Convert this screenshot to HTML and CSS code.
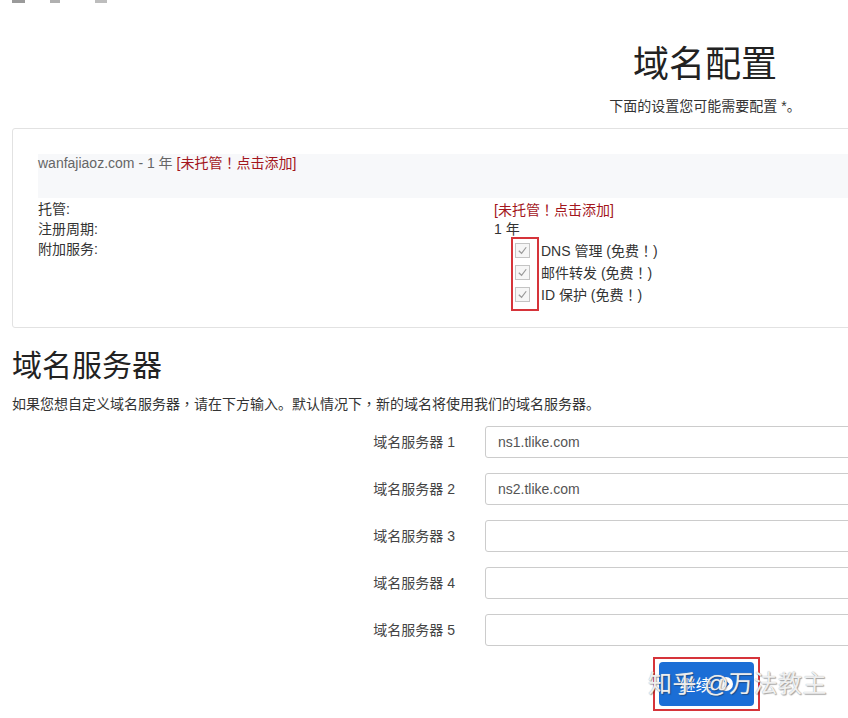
FILE: index.html
```html
<!DOCTYPE html>
<html lang="zh-CN">
<head>
<meta charset="utf-8">
<title>域名配置</title>
<link rel="stylesheet" href="styles.css">
</head>
<body>
<div class="toolbar">
  <span class="tool tool-a"></span>
  <span class="tool tool-b"></span>
  <span class="tool tool-c"></span>
</div>
<div class="page">
  <header class="header">
    <h1 class="title">域名配置</h1>
    <p class="lead">下面的设置您可能需要配置 *。</p>
  </header>

  <section class="panel">
    <div class="domain-bar">wanfajiaoz.com - 1 年 <span class="red">[未托管<span class="p" lang="zh-TW">！</span>点击添加]</span></div>
    <div class="details">
      <div class="labels">
        <div class="row">托管:</div>
        <div class="row">注册周期:</div>
        <div class="row">附加服务:</div>
      </div>
      <div class="values">
        <div class="row red">[未托管<span class="p" lang="zh-TW">！</span>点击添加]</div>
        <div class="row">1 年</div>
        <div class="addons">
          <div class="addon"><span class="cb"><svg viewBox="0 0 14 14"><path d="M3 7.2 L6 10 L11 3.5" fill="none" stroke="#9a9a9a" stroke-width="1.3"/></svg></span><span>DNS 管理 (免费<span class="p" lang="zh-TW">！</span>)</span></div>
          <div class="addon"><span class="cb"><svg viewBox="0 0 14 14"><path d="M3 7.2 L6 10 L11 3.5" fill="none" stroke="#9a9a9a" stroke-width="1.3"/></svg></span><span>邮件转发 (免费<span class="p" lang="zh-TW">！</span>)</span></div>
          <div class="addon"><span class="cb"><svg viewBox="0 0 14 14"><path d="M3 7.2 L6 10 L11 3.5" fill="none" stroke="#9a9a9a" stroke-width="1.3"/></svg></span><span>ID 保护 (免费<span class="p" lang="zh-TW">！</span>)</span></div>
          <span class="mark"></span>
        </div>
      </div>
    </div>
  </section>

  <h2 class="section-title">域名服务器</h2>
  <p class="section-lead">如果您想自定义域名服务器<span class="p" lang="zh-TW">，</span>请在下方输入。默认情况下<span class="p" lang="zh-TW">，</span>新的域名将使用我们的域名服务器。</p>

  <div class="ns-form">
    <label class="ns-label">域名服务器 1</label><div class="ns-input">ns1.tlike.com</div>
    <label class="ns-label">域名服务器 2</label><div class="ns-input">ns2.tlike.com</div>
    <label class="ns-label">域名服务器 3</label><div class="ns-input"></div>
    <label class="ns-label">域名服务器 4</label><div class="ns-input"></div>
    <label class="ns-label">域名服务器 5</label><div class="ns-input"></div>
  </div>

  <div class="actions">
    <button class="btn">继续 <svg class="btn-icon" viewBox="0 0 16 16"><circle cx="8" cy="8" r="7" fill="#fff"/><path d="M6.5 4.5 L10 8 L6.5 11.5" fill="none" stroke="#1b6ed6" stroke-width="2"/></svg></button>
    <span class="btn-mark"></span>
  </div>
</div>
<div class="watermark">知乎 @万法教主</div>
</body>
</html>
```

FILE: styles.css
```css
html, body {
  margin: 0;
  padding: 0;
  background: #fff;
}
body {
  width: 848px;
  height: 718px;
  overflow: hidden;
  position: relative;
  font-family: "Liberation Sans", "Noto Sans CJK SC", sans-serif;
  font-size: 14px;
  color: #333;
}
.p {
  font-family: "Noto Sans CJK TC", "Noto Sans CJK SC", sans-serif;
}
.toolbar {
  height: 6px;
  display: flex;
  align-items: flex-start;
  padding-left: 12px;
}
.tool {
  display: block;
  height: 3px;
  background: #9a9a9a;
}
.tool-a { width: 13px; }
.tool-b { width: 10px; margin-left: 25px; background: #b0b0b0; }
.tool-c { width: 12px; margin-left: 35px; background: #bdbdbd; }

.page {
  margin-left: 12px;
  width: 1386px;
}
.header {
  text-align: center;
  margin-top: 39px;
}
.title {
  margin: 0;
  font-size: 36px;
  line-height: 40px;
  font-weight: normal;
  color: #222;
}
.lead {
  margin: 11px 0 0;
  line-height: 20px;
  font-size: 14px;
  color: #333;
}
.panel {
  margin-top: 12px;
  border: 1px solid #e2e2e2;
  border-radius: 3px;
  padding: 25px 0 22px 25px;
}
.domain-bar {
  background: #f7f8fa;
  height: 44px;
  line-height: 17px;
  color: #666;
}
.red { color: #a3161c; }
.details {
  display: grid;
  grid-template-columns: 456px 1fr;
  margin-top: 1px;
}
.row {
  line-height: 20px;
  height: 20px;
}
.addons {
  position: relative;
}
.addon {
  display: flex;
  align-items: center;
  height: 22px;
  padding-left: 21px;
  gap: 11px;
  color: #333;
}
.cb {
  width: 13px;
  height: 13px;
  border: 1px solid #c4c4c4;
  background: #f6f6f6;
  display: flex;
}
.cb svg { width: 13px; height: 13px; }
.mark {
  position: absolute;
  left: 17px;
  top: -2px;
  width: 24px;
  height: 70px;
  border: 2px solid #d6343a;
}

.section-title {
  margin: 20px 0 0;
  font-size: 30px;
  line-height: 36px;
  font-weight: normal;
  color: #222;
}
.section-lead {
  margin: 9px 0 0;
  line-height: 20px;
  color: #333;
}
.ns-form {
  margin-top: 12px;
  display: grid;
  grid-template-columns: 443px 1fr;
  column-gap: 30px;
  row-gap: 15px;
}
.ns-label {
  text-align: right;
  line-height: 32px;
  color: #444;
}
.ns-input {
  height: 30px;
  border: 1px solid #ccc;
  border-radius: 3px;
  line-height: 30px;
  padding-left: 12px;
  color: #555;
}
.actions {
  position: relative;
  margin-top: 16px;
  padding-left: 647px;
}
.btn {
  width: 95px;
  height: 44px;
  background: #1b6ed6;
  color: #fff;
  border: none;
  border-radius: 4px;
  font-family: "Liberation Sans", "Noto Sans CJK SC", sans-serif;
  font-size: 16px;
  display: flex;
  align-items: center;
  justify-content: center;
  gap: 6px;
  padding: 0;
}
.btn-icon { width: 16px; height: 16px; }
.btn-mark {
  position: absolute;
  left: 641px;
  top: -5px;
  width: 103px;
  height: 50px;
  border: 2px solid #d6343a;
}
.watermark {
  position: absolute;
  left: 648px;
  top: 668px;
  font-size: 24px;
  line-height: 32px;
  color: rgba(255,255,255,0.85);
  text-shadow: 0 0 1px #999, 1px 1px 1px rgba(0,0,0,0.35);
  letter-spacing: 0.5px;
  white-space: nowrap;
}
```
